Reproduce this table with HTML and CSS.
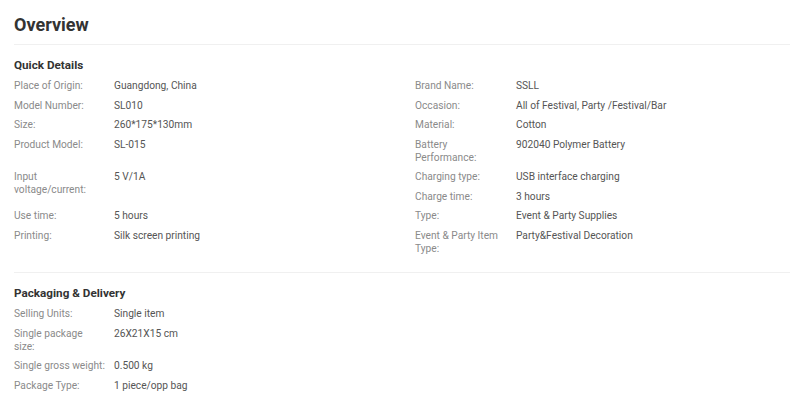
FILE: index.html
```html
<!DOCTYPE html>
<html lang="en">
<head>
<meta charset="utf-8">
<title>Overview</title>
<link rel="stylesheet" href="styles.css">
</head>
<body>
<div class="page">
  <h1 class="title">Overview</h1>
  <section class="section">
    <h2 class="heading">Quick Details</h2>
    <div class="grid">
      <div class="lbl">Place of Origin:</div><div class="val">Guangdong, China</div>
      <div class="lbl">Brand Name:</div><div class="val">SSLL</div>
      <div class="lbl">Model Number:</div><div class="val">SL010</div>
      <div class="lbl">Occasion:</div><div class="val">All of Festival, Party /Festival/Bar</div>
      <div class="lbl">Size:</div><div class="val">260*175*130mm</div>
      <div class="lbl">Material:</div><div class="val">Cotton</div>
      <div class="lbl">Product Model:</div><div class="val">SL-015</div>
      <div class="lbl">Battery Performance:</div><div class="val">902040 Polymer Battery</div>
      <div class="lbl span2">Input voltage/current:</div><div class="val span2">5 V/1A</div>
      <div class="lbl">Charging type:</div><div class="val">USB interface charging</div>
      <div class="lbl">Charge time:</div><div class="val">3 hours</div>
      <div class="lbl">Use time:</div><div class="val">5 hours</div>
      <div class="lbl">Type:</div><div class="val">Event &amp; Party Supplies</div>
      <div class="lbl">Printing:</div><div class="val">Silk screen printing</div>
      <div class="lbl">Event &amp; Party Item Type:</div><div class="val">Party&amp;Festival Decoration</div>
    </div>
  </section>
  <section class="section last">
    <h2 class="heading">Packaging &amp; Delivery</h2>
    <div class="grid">
      <div class="lbl">Selling Units:</div><div class="val">Single item</div>
      <div class="empty"></div><div class="empty"></div>
      <div class="lbl">Single package<br>size:</div><div class="val">26X21X15 cm</div>
      <div class="empty"></div><div class="empty"></div>
      <div class="lbl">Single gross weight:</div><div class="val">0.500 kg</div>
      <div class="empty"></div><div class="empty"></div>
      <div class="lbl">Package Type:</div><div class="val">1 piece/opp bag</div>
      <div class="empty"></div><div class="empty"></div>
    </div>
  </section>
</div>
</body>
</html>
```

FILE: styles.css
```css
html, body {
  margin: 0;
  padding: 0;
  background: #ffffff;
}
body {
  font-family: Roboto, "Liberation Sans", Arial, sans-serif;
  color: #555;
}
.page {
  padding: 13px 10px 0 14px;
}
.title {
  margin: 0;
  font-size: 18px;
  line-height: 24px;
  font-weight: 700;
  color: #333;
  padding-bottom: 7px;
  border-bottom: 1px solid #f0f0f0;
}
.section {
  padding: 12px 0 14px;
  border-bottom: 1px solid #f0f0f0;
}
.section.last {
  border-bottom: none;
}
.heading {
  margin: 0 0 3px;
  font-size: 11.7px;
  line-height: 16px;
  font-weight: 700;
  color: #333;
}
.grid {
  display: grid;
  grid-template-columns: 100px 301px 101px 1fr;
  font-size: 10.2px;
  line-height: 13px;
}
.lbl, .val {
  padding: 3.25px 6px 3.25px 0;
}
.lbl {
  color: #8a8a8a;
}
.val {
  color: #555;
}
.span2 {
  grid-row: span 2;
}
```
